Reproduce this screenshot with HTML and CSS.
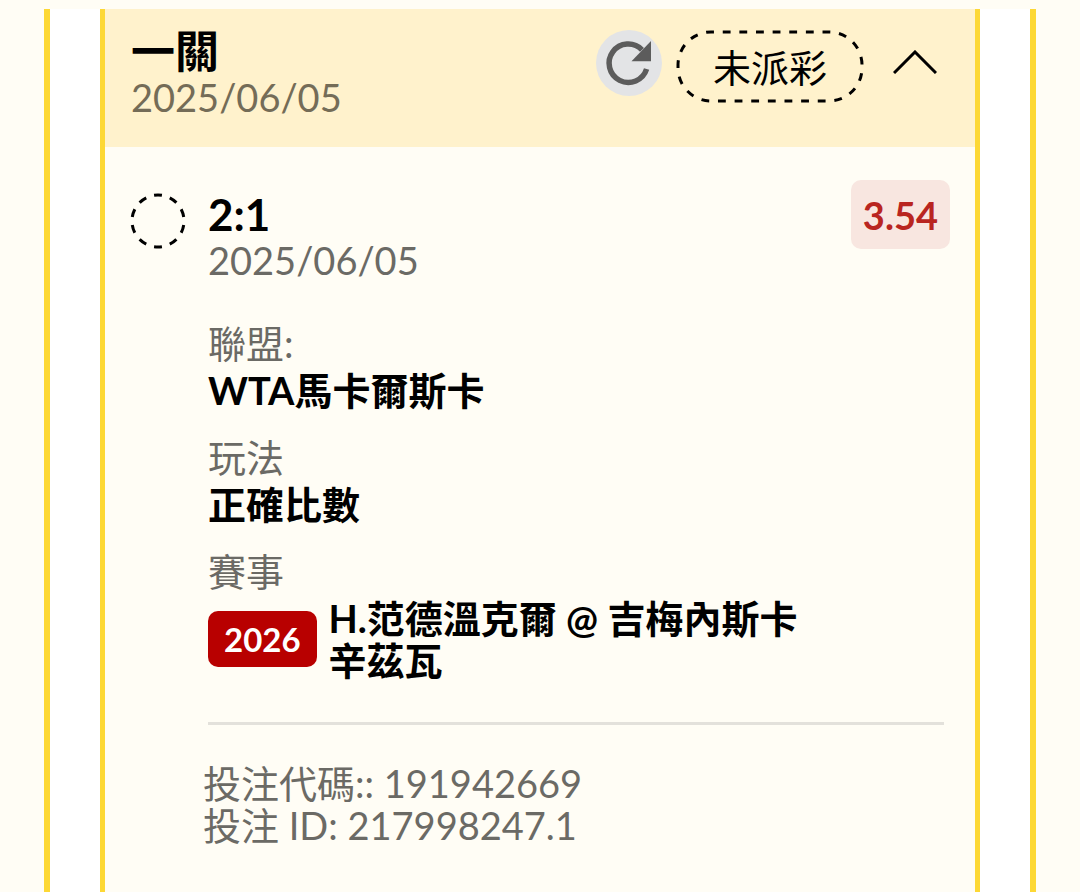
FILE: index.html
```
<!DOCTYPE html>
<html lang="zh-Hant">
<head>
    <meta charset="UTF-8">
    <meta name="viewport" content="width=device-width, initial-scale=1.0">
    <title>投注記錄</title>
    <link rel="stylesheet" href="styles.css">
</head>
<body>
    <main class="history">
        <article class="bet">
            <header class="bet-header">
                <div class="bet-title">
                    <h1>一關</h1>
                    <time datetime="2025-06-05">2025/06/05</time>
                </div>
                <div class="bet-actions">
                    <button type="button" class="refresh" aria-label="重新整理">
                        <svg viewBox="0 0 66 66" aria-hidden="true">
                            <path d="M50.6 39A19.2 19.2 0 1 1 46 19.8" fill="none" stroke="#5c5c5c" stroke-width="5.5"/>
                            <path d="M55 11V31.3H35.5Z" fill="#5c5c5c"/>
                        </svg>
                    </button>
                    <span class="status">
                        <svg class="status-outline" viewBox="0 0 188 73" aria-hidden="true">
                            <rect x="2" y="2" width="184" height="69" rx="33" pathLength="459" stroke-dasharray="8 9" stroke-dashoffset="5"/>
                        </svg>
                        未派彩
                    </span>
                    <button type="button" class="toggle" aria-label="收合" aria-expanded="true">
                        <svg viewBox="0 0 44 24" aria-hidden="true">
                            <path d="M1 23L22 2L43 23"/>
                        </svg>
                    </button>
                </div>
            </header>

            <section class="bet-body">
                <svg class="pending" viewBox="0 0 56 56" aria-hidden="true">
                    <circle cx="28" cy="28" r="26" pathLength="160" stroke-dasharray="8 8" stroke-dashoffset="-36"/>
                </svg>
                <div class="selection">
                    <div class="selection-head">
                        <div>
                            <h2>2:1</h2>
                            <time datetime="2025-06-05">2025/06/05</time>
                        </div>
                        <span class="odds">3.54</span>
                    </div>

                    <dl class="details">
                        <div>
                            <dt>聯盟:</dt>
                            <dd>WTA馬卡爾斯卡</dd>
                        </div>
                        <div>
                            <dt>玩法</dt>
                            <dd>正確比數</dd>
                        </div>
                        <div>
                            <dt>賽事</dt>
                            <dd class="match">
                                <span class="year">2026</span>
                                <span>H.范德溫克爾 @ 吉梅內斯卡辛茲瓦</span>
                            </dd>
                        </div>
                    </dl>

                    <footer class="bet-codes">
                        <p>投注代碼:: 191942669</p>
                        <p>投注 ID: 217998247.1</p>
                    </footer>
                </div>
            </section>
        </article>
    </main>
</body>
</html>
```

FILE: styles.css
```
* {
    box-sizing: border-box;
}

/* Page */
body {
    margin: 0;
    padding: 9px 44px 0;
    min-height: 100vh;
    display: flex;
    background-color: #fffdf5;
    color: #000;
    font-family: Lato, "Noto Sans CJK TC", sans-serif;
    font-size: 38px;
    line-height: 42px;
}

h1, h2, p, dl, dd {
    margin: 0;
}

h1, h2 {
    margin-bottom: 2px;
    font-size: 44px;
    line-height: 46px;
    font-weight: 700;
}

time, dt {
    display: block;
    color: #6b6a65;
}

button {
    padding: 0;
    border: none;
    background: none;
    cursor: pointer;
}

svg {
    display: block;
}

/* Outer frame */
.history {
    flex: 1;
    display: flex;
    padding: 0 50px;
    background-color: #fff;
    border: solid #fdd835;
    border-width: 0 6px;
}

.bet {
    flex: 1;
    background-color: #fffdf5;
    border: solid #fdd835;
    border-width: 0 5px;
}

/* Yellow header */
.bet-header {
    display: flex;
    justify-content: space-between;
    align-items: flex-start;
    padding: 19px 38px 29px 26px;
    background-color: #fff2cc;
}

.bet-header time {
    color: #746c57;
}

.bet-actions {
    display: flex;
    align-items: flex-start;
    padding-top: 2px;
}

.refresh {
    width: 66px;
    height: 66px;
    margin-right: 14px;
    border-radius: 50%;
    background-color: #e3e4e6;
}

.status {
    position: relative;
    padding: 16px 37px 15px;
}

.status-outline {
    position: absolute;
    inset: 0;
    width: 100%;
    height: 100%;
}

.status-outline rect,
.pending circle,
.toggle path {
    fill: none;
    stroke: #000;
    stroke-width: 3;
}

.toggle {
    width: 44px;
    margin: 20px 0 0 29px;
}

/* Selection */
.bet-body {
    display: flex;
    align-items: flex-start;
    gap: 22px;
    padding: 33px 25px 40px;
}

.pending {
    flex: none;
    width: 56px;
    height: 56px;
    margin-top: 13px;
}

.selection {
    flex: 1;
}

.selection-head {
    display: flex;
    justify-content: space-between;
    align-items: flex-start;
}

.selection-head h2 {
    padding-top: 11px;
}

.odds {
    padding: 14px 12px 13px;
    border-radius: 10px;
    background-color: #f8e6e0;
    color: #b92520;
    font-weight: 700;
}

.details {
    display: grid;
    gap: 25px;
    margin-right: 6px;
    padding: 41px 0;
    border-bottom: 3px solid #e3e1db;
}

dd {
    margin-top: 5px;
    font-weight: 700;
}

.match {
    display: flex;
    align-items: center;
    gap: 12px;
    padding-right: 110px;
}

.year {
    padding: 7px 16px;
    border-radius: 10px;
    background-color: #b80000;
    color: #fff;
    font-size: 33px;
}

/* Bet references */
.bet-codes {
    margin-left: -5px;
    padding-top: 37px;
    color: #6b6a65;
}
```
